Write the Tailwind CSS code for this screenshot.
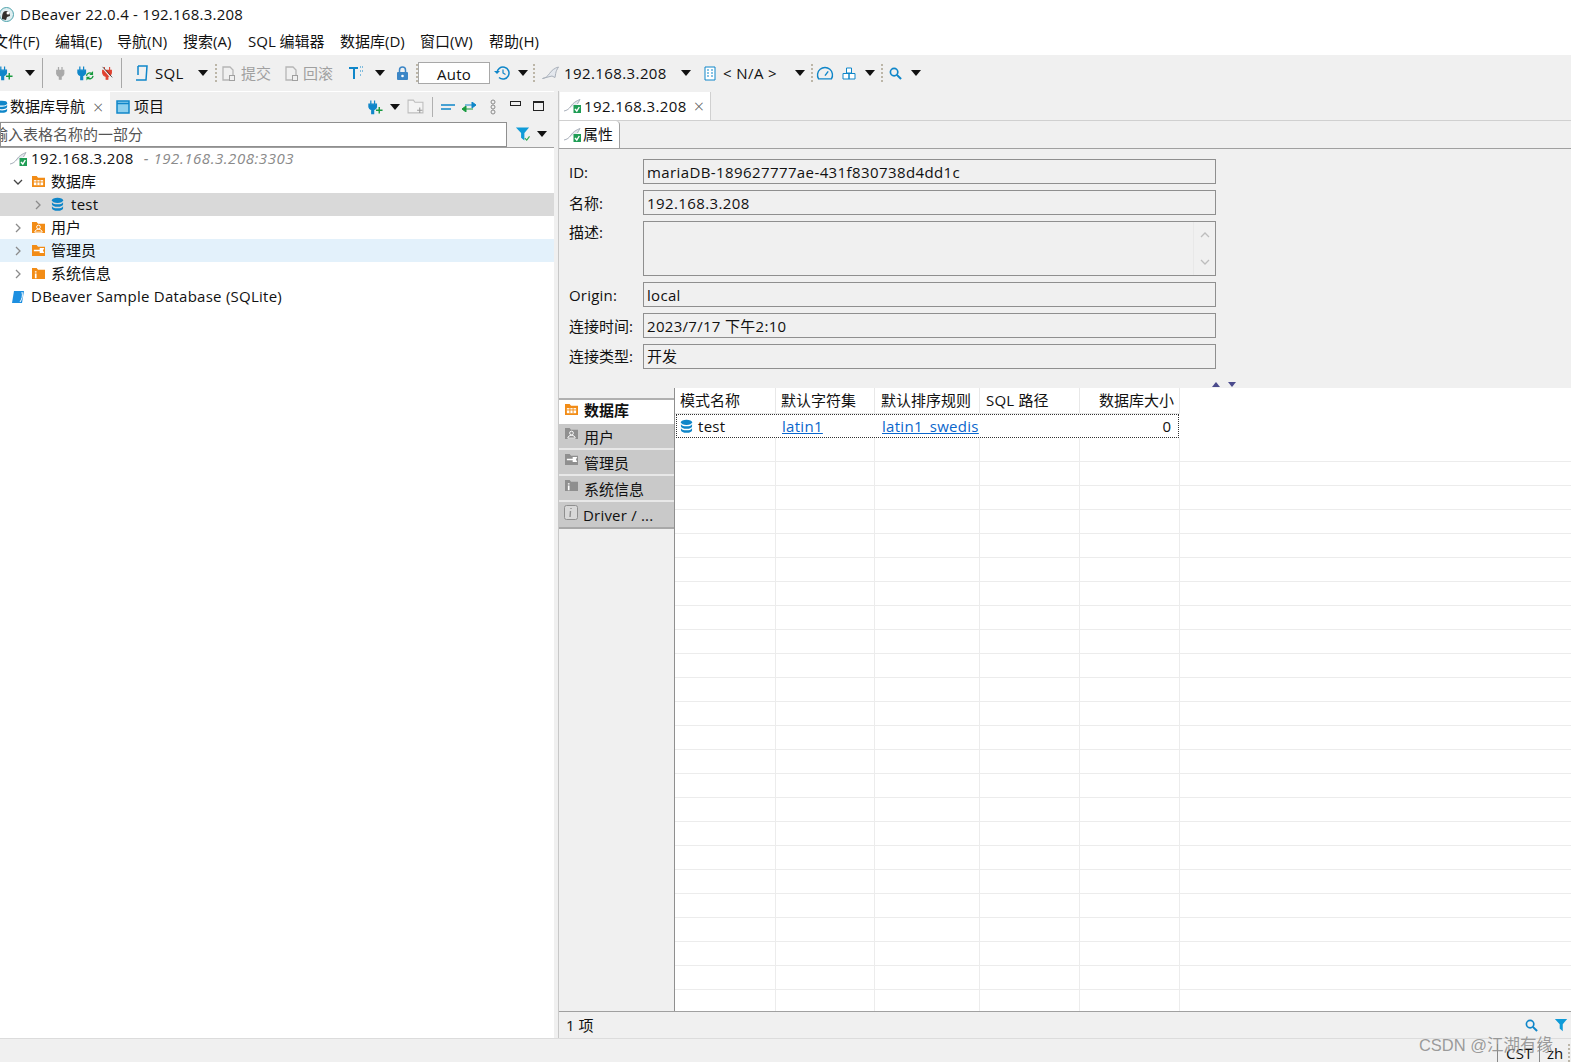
<!DOCTYPE html>
<html lang="zh">
<head>
    <meta charset="UTF-8">
    <title>DBeaver 22.0.4 - 192.168.3.208</title>
    <script src="https://cdn.jsdelivr.net/npm/@tailwindcss/browser@4"></script>
</head>
<body class="w-[1571px] h-[1062px] overflow-hidden bg-white text-[15px] text-[#111] font-['Open_Sans','Noto_Sans_CJK_SC',sans-serif]">

    <!-- shared icons -->
    <svg class="hidden">
        <symbol id="plug" viewBox="0 0 16 16"><path d="M4 1v4M8 1v4M2 5h8v4a4 4 0 0 1-3 3v3H5v-3a4 4 0 0 1-3-3z" fill="currentColor" stroke="currentColor" stroke-width="1.400"/></symbol>
        <symbol id="plug-add" viewBox="0 0 16 16"><path d="M3 1v4M7 1v4M1 5h8v3a4 4 0 0 1-3 3v4H4v-4a4 4 0 0 1-3-3z" fill="#0f86c9" stroke="#0f86c9" stroke-width="1.300"/><path d="M12 8v7M8.500 11.500h7" stroke="#189a3f" stroke-width="1.500"/></symbol>
        <symbol id="plug-sync" viewBox="0 0 18 16"><path d="M3 1v4M7 1v4M1 5h8v3a4 4 0 0 1-3 3v4H4v-4a4 4 0 0 1-3-3z" fill="#0f86c9" stroke="#0f86c9" stroke-width="1.300"/><path d="M10 11a3.500 3.500 0 0 1 6-2M17 11a3.500 3.500 0 0 1-6 2" fill="none" stroke="#189a3f" stroke-width="1.400"/><path d="M17 6v4h-4zM10 16v-4h4z" fill="#189a3f"/></symbol>
        <symbol id="plug-x" viewBox="0 0 16 16"><path d="M5 1v4M11 1v4M3 5h10v3a5 5 0 0 1-4 4v3H7v-3a5 5 0 0 1-4-4z" fill="#e0402f" stroke="#e0402f" stroke-width="1.200"/><path d="M2 1l12 14" stroke="#f0f0f0" stroke-width="1.500"/><path d="M3 1l11 12" stroke="#222" stroke-width=".8"/></symbol>
        <symbol id="conn" viewBox="0 0 17 14"><path d="M0 12.500c3-.5 5-2 7-5s5-5.500 9-6.500c-1.500 2.500-2.500 4-2.800 6.500l-.7 4-3-1.500-4 1z" fill="#e4e8ee" stroke="#a9b0ba"/></symbol>
        <symbol id="conn-ok" viewBox="0 0 17 14"><path d="M0 12c3-.5 5-2 7-5s5-5 9-6.500c-1 2-2 3-2.500 4.500" fill="#e4e8ee" stroke="#a9b0ba"/><rect x="9.500" y="6" width="7.500" height="8" fill="#1f9d55"/><path d="M11 10l1.800 2 2.500-4" fill="none" stroke="#fff" stroke-width="1.400"/></symbol>
        <symbol id="db" viewBox="0 0 14 16"><ellipse cx="7" cy="3.500" rx="6" ry="2.800" fill="currentColor"/><path d="M1 5.500v2.200c0 1.600 2.700 2.800 6 2.800s6-1.200 6-2.800V5.500c-1 1.600-3 2.300-6 2.300s-5-.7-6-2.300zM1 9.800V12c0 1.600 2.700 2.800 6 2.800s6-1.200 6-2.800V9.800c-1 1.600-3 2.300-6 2.300s-5-.7-6-2.300z" fill="currentColor"/></symbol>
        <symbol id="folder-grid" viewBox="0 0 16 14"><path d="M1 1h5l1.500 2H15v10H1z" fill="currentColor"/><path d="M3 5.500h10v5.500H3z" fill="#fff"/><path d="M6.300 5.500v5.500M9.700 5.500v5.500M3 7.500h10" stroke="currentColor"/></symbol>
        <symbol id="folder-user" viewBox="0 0 16 14"><path d="M1 1h5l1.500 2H15v10H1z" fill="currentColor"/><circle cx="8" cy="6.500" r="2" fill="none" stroke="#fff"/><path d="M4 12c0-2 2-3 4-3s4 1 4 3z" fill="none" stroke="#fff"/></symbol>
        <symbol id="folder-tool" viewBox="0 0 16 14"><path d="M1 1h5l1.500 2H15v10H1z" fill="currentColor"/><path d="M3 7h7M10 5h3l-1 2 1 2h-3z" stroke="#fff" stroke-width="1.500" fill="#fff"/></symbol>
        <symbol id="folder-info" viewBox="0 0 16 14"><path d="M1 1h5l1.500 2H15v10H1z" fill="currentColor"/><path d="M5 4.500v1.500M5 7v5" stroke="#fff" stroke-width="1.800"/></symbol>
        <symbol id="folder-add" viewBox="0 0 16 14"><path d="M1 1h5l1.500 2H15v10H1z" fill="#f4f4f4" stroke="#bdbdbd"/><path d="M12 8v5M9.500 10.500h5" stroke="#9a9a9a"/></symbol>
        <symbol id="search" viewBox="0 0 14 14"><circle cx="5.500" cy="5.500" r="4" fill="none" stroke="currentColor" stroke-width="1.800"/><path d="M8.500 8.500L13 13" stroke="currentColor" stroke-width="2.200"/></symbol>
        <symbol id="filter" viewBox="0 0 16 16"><path d="M1 1h14l-5 6v8L6.500 12V7z" fill="currentColor"/></symbol>
        <symbol id="doc" viewBox="0 0 13 15"><path d="M1 1h7l3 3v10H1z" fill="none" stroke="#b5b5b5" stroke-width="1.300"/><rect x="7.500" y="9.500" width="5" height="5" fill="#f0f0f0" stroke="#a0a0a0"/></symbol>
        <symbol id="arrow" viewBox="0 0 10 6"><path d="M0 0h10L5 6z" fill="#111"/></symbol>
        <symbol id="chev" viewBox="0 0 6 10"><path d="M1 1l4 4-4 4" fill="none" stroke="#8b8b8b" stroke-width="1.300"/></symbol>
    </svg>

    <!-- title bar -->
    <div class="h-[28px] flex items-center">
        <svg class="w-[15px] h-[15px] ml-[-1px] mr-[6px]" viewBox="0 0 15 15"><circle cx="7.500" cy="7.500" r="7" fill="#dfeef0" stroke="#4fa3ad"/><path d="M3 12c0-5 1-8 4-8s4 3 4 5l-3 1-1 3z" fill="#33302c"/><circle cx="9" cy="6" r="1.500" fill="#fff"/></svg>
        <span class="tracking-[0.25px]">DBeaver 22.0.4 - 192.168.3.208</span>
    </div>

    <!-- menu -->
    <div class="h-[27px] flex items-center ml-[-7px]">
        <span class="w-[62px]">文件(F)</span>
        <span class="w-[62px]">编辑(E)</span>
        <span class="w-[66px]">导航(N)</span>
        <span class="w-[65px]">搜索(A)</span>
        <span class="w-[92px]">SQL 编辑器</span>
        <span class="w-[80px]">数据库(D)</span>
        <span class="w-[69px]">窗口(W)</span>
        <span>帮助(H)</span>
    </div>

    <!-- toolbar -->
    <div class="h-[36px] bg-[#f0f0f0] flex items-center relative">
        <svg class="w-[15px] h-[16px] ml-[-2px]"><use href="#plug-add"/></svg>
        <svg class="w-[10px] h-[6px] ml-[12px]"><use href="#arrow"/></svg>
        <div class="w-px h-[30px] bg-[#a8a8a8] ml-[7px]"></div>
        <svg class="w-[14px] h-[16px] ml-[12px] text-[#a9a9a9]"><use href="#plug"/></svg>
        <svg class="w-[17px] h-[16px] ml-[8px]"><use href="#plug-sync"/></svg>
        <svg class="w-[14px] h-[16px] ml-[6px]"><use href="#plug-x"/></svg>
        <div class="w-px h-[30px] bg-[#a8a8a8] ml-[7px]"></div>
        <svg class="w-[14px] h-[17px] ml-[13px]" viewBox="0 0 14 17"><path d="M3 1h9l-1 14H1" fill="none" stroke="#0f86c9" stroke-width="1.500"/><path d="M3 1v9" stroke="#0f86c9" stroke-width="1.500"/></svg>
        <span class="ml-[6px] w-[43px] tracking-[0.3px]">SQL</span>
        <svg class="w-[10px] h-[6px]"><use href="#arrow"/></svg>
        <div class="w-[2px] h-[18px] ml-[7px] border-l-2 border-dotted border-[#bcb6a8]"></div>
        <svg class="w-[13px] h-[15px] ml-[5px]"><use href="#doc"/></svg>
        <span class="ml-[6px] text-[#a0a0a0]">提交</span>
        <svg class="w-[13px] h-[15px] ml-[14px]"><use href="#doc"/></svg>
        <span class="ml-[5px] text-[#a0a0a0]">回滚</span>
        <svg class="w-[15px] h-[14px] ml-[16px]" viewBox="0 0 15 14"><path d="M0 1h9v2H6v10H4V3H0z" fill="#0f86c9"/><path d="M11 1h4M11 5h4M11 9h2" stroke="#0f86c9" stroke-dasharray="1 1"/></svg>
        <svg class="w-[10px] h-[6px] ml-[11px]"><use href="#arrow"/></svg>
        <svg class="w-[13px] h-[15px] ml-[11px]" viewBox="0 0 13 15"><path d="M3.500 6V4a3 3 0 0 1 6 0v2" fill="none" stroke="#3c86c6" stroke-width="1.500"/><rect x="1" y="6" width="11" height="8" rx="1" fill="#3c86c6"/><circle cx="6.500" cy="10" r="1.300" fill="#fff"/></svg>
        <div class="w-[2px] h-[18px] ml-[7px] border-l-2 border-dotted border-[#bcb6a8]"></div>
        <div class="w-[72px] h-[22px] bg-white border border-[#a8a8a8] flex items-center justify-center pt-[2px] tracking-[0.3px]">Auto</div>
        <svg class="w-[17px] h-[16px] ml-[4px]" viewBox="0 0 17 16"><path d="M3 8a6 6 0 1 1 2 4.500" fill="none" stroke="#0f86c9" stroke-width="1.500"/><path d="M0 6l3 3 3-3z" fill="#0f86c9"/><path d="M9 4.500V8l2.500 1.500" fill="none" stroke="#0f86c9" stroke-width="1.200"/></svg>
        <svg class="w-[10px] h-[6px] ml-[7px]"><use href="#arrow"/></svg>
        <div class="w-[2px] h-[18px] ml-[5px] border-l-2 border-dotted border-[#bcb6a8]"></div>
        <svg class="w-[18px] h-[14px] ml-[7px]"><use href="#conn"/></svg>
        <span class="ml-[4px] w-[117px] tracking-[0.4px]">192.168.3.208</span>
        <svg class="w-[10px] h-[6px]"><use href="#arrow"/></svg>
        <svg class="w-[12px] h-[15px] ml-[13px]" viewBox="0 0 12 15"><path d="M1 1h10v13H1z" fill="#fff" stroke="#0f86c9"/><path d="M3 4h2M7 4h2M3 7h2M7 7h2M3 10h2M7 10h2" stroke="#0f86c9"/></svg>
        <span class="ml-[7px] w-[72px] tracking-[0.4px]">&lt; N/A &gt;</span>
        <svg class="w-[10px] h-[6px]"><use href="#arrow"/></svg>
        <div class="w-[2px] h-[18px] ml-[6px] border-l-2 border-dotted border-[#bcb6a8]"></div>
        <svg class="w-[18px] h-[15px] ml-[3px]" viewBox="0 0 16 14"><path d="M2 12a7 7 0 1 1 12 0z" fill="none" stroke="#0f86c9" stroke-width="1.300"/><path d="M8 9l3-4" stroke="#0f86c9" stroke-width="1.300"/></svg>
        <svg class="w-[14px] h-[13px] ml-[8px]" viewBox="0 0 14 13"><path d="M4.500 1h5v5h-5zM1 6.500h6v5.500H1zM7 6.500h6v5.500H7z" fill="#fff" stroke="#0f86c9"/></svg>
        <svg class="w-[10px] h-[6px] ml-[9px]"><use href="#arrow"/></svg>
        <div class="w-[2px] h-[18px] ml-[6px] border-l-2 border-dotted border-[#bcb6a8]"></div>
        <svg class="w-[13px] h-[13px] ml-[6px] text-[#0f86c9]"><use href="#search"/></svg>
        <svg class="w-[10px] h-[6px] ml-[9px]"><use href="#arrow"/></svg>
    </div>

    <!-- main -->
    <div class="h-[947px] bg-[#f0f0f0] flex">

        <!-- navigator -->
        <div class="w-[554px] shrink-0 flex flex-col bg-white">
            <div class="h-[29px] mt-px bg-[#f0f0f0] flex items-center relative">
                <div class="h-full w-[110px] bg-white flex items-center">
                    <svg class="w-[12px] h-[14px] ml-[-4px] text-[#0f86c9]"><use href="#db"/></svg>
                    <span class="ml-[2px]">数据库导航</span>
                    <span class="ml-[8px] text-[#555] text-[18px] leading-none font-light">×</span>
                </div>
                <svg class="w-[14px] h-[14px] ml-[6px]" viewBox="0 0 14 14"><rect x="1" y="1" width="12" height="12" fill="#8ed0ee" stroke="#0f86c9" stroke-width="1.500"/><path d="M1 3.500h12" stroke="#0f86c9" stroke-width="1.500"/></svg>
                <span class="ml-[4px]">项目</span>
                <div class="flex items-center ml-auto">
                    <svg class="w-[15px] h-[16px]"><use href="#plug-add"/></svg>
                    <svg class="w-[10px] h-[6px] ml-[7px]"><use href="#arrow"/></svg>
                    <svg class="w-[17px] h-[15px] ml-[7px]"><use href="#folder-add"/></svg>
                    <div class="w-px h-[20px] bg-[#b0b0b0] ml-[8px]"></div>
                    <svg class="w-[14px] h-[8px] ml-[8px]" viewBox="0 0 14 8"><path d="M0 2h14M0 6h10" stroke="#0f86c9" stroke-width="1.500"/></svg>
                    <svg class="w-[16px] h-[10px] ml-[6px]" viewBox="0 0 16 10"><path d="M4 3h10M11 0l4 3-4 3z" stroke="#0f86c9" fill="#0f86c9"/><path d="M12 7H2M5 4L1 7l4 3z" stroke="#189a3f" fill="#189a3f"/></svg>
                    <svg class="w-[6px] h-[16px] ml-[13px]" viewBox="0 0 6 16"><g fill="none" stroke="#8b8b8b"><circle cx="3" cy="3" r="2"/><circle cx="3" cy="8" r="2"/><circle cx="3" cy="13" r="2"/></g></svg>
                    <div class="w-[11px] h-[5px] border border-[#222] ml-[14px] mb-[6px]"></div>
                    <div class="w-[11px] h-[10px] border border-[#222] border-t-2 ml-[12px] mr-[10px] mb-[2px]"></div>
                </div>
            </div>
            <div class="h-[26px] bg-[#f0f0f0] flex items-center">
                <div class="w-[507px] h-[25px] bg-white border border-[#8f8f8f] flex items-center overflow-hidden">
                    <span class="ml-[-8px] text-[#555] whitespace-nowrap">输入表格名称的一部分</span>
                </div>
                <svg class="w-[15px] h-[16px] ml-[8px]" viewBox="0 0 16 16"><path d="M1 1h14l-5 6v8L6.500 12V7z" fill="#0f9bd8"/><path d="M10.500 12.500l2 2 3-4" fill="none" stroke="#2da84f" stroke-width="1.200"/></svg>
                <svg class="w-[10px] h-[6px] ml-[7px]"><use href="#arrow"/></svg>
            </div>

            <!-- tree -->
            <div class="flex-1 border-t border-[#a0a0a0]">
                <div class="h-[22px] flex items-center pb-[1px]">
                    <svg class="w-[17px] h-[14px] ml-[10px]"><use href="#conn-ok"/></svg>
                    <span class="ml-[4px] tracking-[0.4px]">192.168.3.208</span>
                    <span class="ml-[10px] italic text-[#8a8a8a] tracking-[0.55px]">- 192.168.3.208:3303</span>
                </div>
                <div class="h-[23px] flex items-center">
                    <svg class="w-[10px] h-[6px] ml-[13px]" viewBox="0 0 10 6"><path d="M1 1l4 4 4-4" fill="none" stroke="#444" stroke-width="1.300"/></svg>
                    <svg class="w-[15px] h-[13px] ml-[8px] text-[#f28c16]"><use href="#folder-grid"/></svg>
                    <span class="ml-[5px]">数据库</span>
                </div>
                <div class="h-[23px] flex items-center bg-[#d9d9d9]">
                    <svg class="w-[6px] h-[10px] ml-[35px]"><use href="#chev"/></svg>
                    <svg class="w-[13px] h-[15px] ml-[10px] text-[#0f86c9]"><use href="#db"/></svg>
                    <span class="ml-[7px] tracking-[0.3px]">test</span>
                </div>
                <div class="h-[23px] flex items-center">
                    <svg class="w-[6px] h-[10px] ml-[15px]"><use href="#chev"/></svg>
                    <svg class="w-[15px] h-[13px] ml-[10px] text-[#f28c16]"><use href="#folder-user"/></svg>
                    <span class="ml-[5px]">用户</span>
                </div>
                <div class="h-[23px] flex items-center bg-[#e3f1fb]">
                    <svg class="w-[6px] h-[10px] ml-[15px]"><use href="#chev"/></svg>
                    <svg class="w-[15px] h-[13px] ml-[10px] text-[#f28c16]"><use href="#folder-tool"/></svg>
                    <span class="ml-[5px]">管理员</span>
                </div>
                <div class="h-[23px] flex items-center">
                    <svg class="w-[6px] h-[10px] ml-[15px]"><use href="#chev"/></svg>
                    <svg class="w-[15px] h-[13px] ml-[10px] text-[#f28c16]"><use href="#folder-info"/></svg>
                    <span class="ml-[5px]">系统信息</span>
                </div>
                <div class="h-[23px] flex items-center">
                    <svg class="w-[14px] h-[14px] ml-[11px]" viewBox="0 0 14 14"><path d="M3 1h10l-2 12H1z" fill="#1d8fe0"/><path d="M11 2c1 4 0 7-2 10" stroke="#fff" fill="none"/></svg>
                    <span class="ml-[6px] tracking-[0.25px]">DBeaver Sample Database (SQLite)</span>
                </div>
            </div>
        </div>

        <!-- editor -->
        <div class="ml-[4px] flex-1 flex flex-col border-l border-[#c8c8c8]">
            <div class="h-[29px] mt-px flex border-b border-[#d0d0d0]">
                <div class="w-[151px] ml-px bg-white flex items-center border-r border-[#d0d0d0]">
                    <svg class="w-[17px] h-[14px] ml-[4px]"><use href="#conn-ok"/></svg>
                    <span class="ml-[3px] tracking-[0.4px]">192.168.3.208</span>
                    <span class="ml-[7px] text-[#555] text-[18px] leading-none font-light">×</span>
                </div>
            </div>
            <div class="h-[28px] flex border-b border-[#a0a0a0]">
                <div class="w-[60px] ml-px bg-white flex items-center border-r border-[#a0a0a0] rounded-tr-[4px]">
                    <svg class="w-[17px] h-[14px] ml-[4px]"><use href="#conn-ok"/></svg>
                    <span class="ml-[2px]">属性</span>
                </div>
            </div>

            <!-- properties -->
            <div class="h-[239px] pt-[10px] pl-[10px]">
                <div class="flex items-center h-[25px] mb-[6px]">
                    <span class="w-[74px] mt-[2px]">ID:</span>
                    <div class="w-[573px] h-full border border-[#8f8f8f] flex items-center pl-[3px] pt-[2px] tracking-[0.4px]">mariaDB-189627777ae-431f830738d4dd1c</div>
                </div>
                <div class="flex items-center h-[25px] mb-[6px]">
                    <span class="w-[74px] mt-[2px]">名称:</span>
                    <div class="w-[573px] h-full border border-[#8f8f8f] flex items-center pl-[3px] pt-[2px] tracking-[0.4px]">192.168.3.208</div>
                </div>
                <div class="flex h-[55px] mb-[6px]">
                    <span class="w-[74px]">描述:</span>
                    <div class="w-[573px] h-full border border-[#8f8f8f] flex justify-end">
                        <div class="w-[22px] border-l border-[#e8e8e8] flex flex-col items-center justify-between py-[10px]">
                            <svg class="w-[10px] h-[6px]" viewBox="0 0 10 6"><path d="M1 5l4-4 4 4" fill="none" stroke="#bdbdbd" stroke-width="1.300"/></svg>
                            <svg class="w-[10px] h-[6px]" viewBox="0 0 10 6"><path d="M1 1l4 4 4-4" fill="none" stroke="#bdbdbd" stroke-width="1.300"/></svg>
                        </div>
                    </div>
                </div>
                <div class="flex items-center h-[25px] mb-[6px]">
                    <span class="w-[74px] mt-[2px] tracking-[0.2px]">Origin:</span>
                    <div class="w-[573px] h-full border border-[#8f8f8f] flex items-center pl-[3px] pt-[2px] tracking-[0.3px]">local</div>
                </div>
                <div class="flex items-center h-[25px] mb-[6px]">
                    <span class="w-[74px] mt-[2px]">连接时间:</span>
                    <div class="w-[573px] h-full border border-[#8f8f8f] flex items-center pl-[3px] pt-[2px] tracking-[0.3px]">2023/7/17 下午2:10</div>
                </div>
                <div class="flex items-center h-[25px] relative">
                    <span class="w-[74px]">连接类型:</span>
                    <div class="w-[573px] h-full border border-[#8f8f8f] flex items-center pl-[3px]">开发</div>
                    <div class="absolute left-[643px] top-[38px] flex gap-[8px]">
                        <div class="w-0 h-0 border-x-[4px] border-x-transparent border-b-[5px] border-b-[#4a4a8c]"></div>
                        <div class="w-0 h-0 border-x-[4px] border-x-transparent border-t-[5px] border-t-[#4a4a8c]"></div>
                    </div>
                </div>
            </div>

            <!-- folders and table -->
            <div class="h-[624px] flex border-b border-[#a0a0a0]">
                <div class="w-[116px] shrink-0 pt-[10px] border-r border-[#8f8f8f]">
                    <div class="h-[26px] bg-white border-t-2 border-[#b0b0b0] flex items-center font-semibold pb-[3px]">
                        <svg class="w-[15px] h-[13px] ml-[5px] mb-[2px] text-[#f28c16]"><use href="#folder-grid"/></svg>
                        <span class="ml-[5px]">数据库</span>
                    </div>
                    <div class="h-[26px] bg-[#c9c9c9] border-b-2 border-[#e8e8e8] flex items-center">
                        <svg class="w-[15px] h-[13px] ml-[5px] mb-[5px] text-[#8f8f8f]"><use href="#folder-user"/></svg>
                        <span class="ml-[5px] mt-[2px]">用户</span>
                    </div>
                    <div class="h-[26px] bg-[#c9c9c9] border-b-2 border-[#e8e8e8] flex items-center">
                        <svg class="w-[15px] h-[13px] ml-[5px] mb-[5px] text-[#8f8f8f]"><use href="#folder-tool"/></svg>
                        <span class="ml-[5px] mt-[2px]">管理员</span>
                    </div>
                    <div class="h-[26px] bg-[#c9c9c9] border-b-2 border-[#e8e8e8] flex items-center">
                        <svg class="w-[15px] h-[13px] ml-[5px] mb-[5px] text-[#8f8f8f]"><use href="#folder-info"/></svg>
                        <span class="ml-[5px] mt-[2px]">系统信息</span>
                    </div>
                    <div class="h-[27px] bg-[#c9c9c9] border-b-2 border-[#a8a8a8] flex items-center">
                        <svg class="w-[14px] h-[15px] ml-[5px] mb-[4px]" viewBox="0 0 14 15"><rect x=".5" y=".5" width="13" height="14" rx="2" fill="#d8d8d8" stroke="#8f8f8f"/><path d="M7 3v1M6.500 6L6 12" stroke="#8f8f8f" stroke-width="1.400"/></svg>
                        <span class="ml-[5px] mt-[2px] tracking-[0.2px]">Driver / ...</span>
                    </div>
                </div>
                <div id="grid" class="flex-1 bg-white overflow-hidden">
                    <div class="flex h-[26px] bg-white">
                        <div class="w-[101px] pl-[5px] flex items-center border-r border-b border-[#e8e8e8]">模式名称</div>
                        <div class="w-[99px] pl-[5px] flex items-center border-r border-b border-[#e8e8e8]">默认字符集</div>
                        <div class="w-[105px] pl-[6px] flex items-center border-r border-b border-[#e8e8e8]">默认排序规则</div>
                        <div class="w-[100px] pl-[6px] flex items-center border-r border-b border-[#e8e8e8] tracking-[0.2px]">SQL 路径</div>
                        <div class="w-[100px] pr-[5px] flex items-center justify-end border-r border-b border-[#e8e8e8]">数据库大小</div>
                    </div>
                    <div class="flex h-[24px] w-[503px] border border-dotted border-[#333] ml-px">
                        <div class="w-[100px] flex items-center">
                            <svg class="w-[13px] h-[15px] ml-[3px] text-[#0f86c9]"><use href="#db"/></svg>
                            <span class="ml-[5px] tracking-[0.3px]">test</span>
                        </div>
                        <div class="w-[99px] pl-[5px] flex items-center"><span class="text-[#0a66cc] underline tracking-[0.3px]">latin1</span></div>
                        <div class="w-[104px] pl-[6px] flex items-center overflow-hidden"><span class="text-[#0a66cc] underline whitespace-nowrap tracking-[0.3px]">latin1_swedis</span></div>
                        <div class="w-[100px]"></div>
                        <div class="w-[98px] pr-[7px] flex items-center justify-end">0</div>
                    </div>
                    <div id="rows"></div>
                </div>
            </div>

            <!-- result status -->
            <div class="h-[26px] flex items-center pl-[7px]">
                <span>1 项</span>
                <svg class="w-[13px] h-[13px] ml-auto text-[#0f86c9]"><use href="#search"/></svg>
                <svg class="w-[14px] h-[14px] ml-[16px] mr-[3px] text-[#0f9bd8]"><use href="#filter"/></svg>
            </div>
        </div>
    </div>

    <!-- status bar -->
    <div class="h-[24px] bg-[#f0f0f0] border-t border-[#dcdcdc] flex items-center justify-end relative">
        <div class="h-[18px] mt-[4px] border-l border-[#888] pl-[8px] w-[42px] leading-[18px] tracking-[0.3px]">CST</div>
        <div class="h-[18px] mt-[4px] border-l border-[#888] pl-[7px] w-[29px] leading-[18px]">zh</div>
        <div class="w-[2px] h-[18px] mt-[4px] mr-px border-l-2 border-dotted border-[#bcb6a8]"></div>
        <div class="absolute right-[18px] top-[-6px] text-[16.500px] text-[#8f8f8f]/90 font-['Liberation_Sans','Noto_Sans_CJK_SC',sans-serif]">CSDN @江湖有缘</div>
    </div>

    <script>
        // empty rows of the result grid
        const rows = document.getElementById('rows');
        for (let i = 0; i < 24; i++) {
            const row = document.createElement('div');
            row.setAttribute('class', 'flex h-[24px] border-b border-[#ececec]');
            [101, 99, 105, 100, 100].forEach(w => {
                const cell = document.createElement('div');
                cell.setAttribute('class', 'border-r border-[#ececec] h-full');
                cell.style.width = w + 'px';
                row.appendChild(cell);
            });
            rows.appendChild(row);
        }
    </script>
</body>
</html>
